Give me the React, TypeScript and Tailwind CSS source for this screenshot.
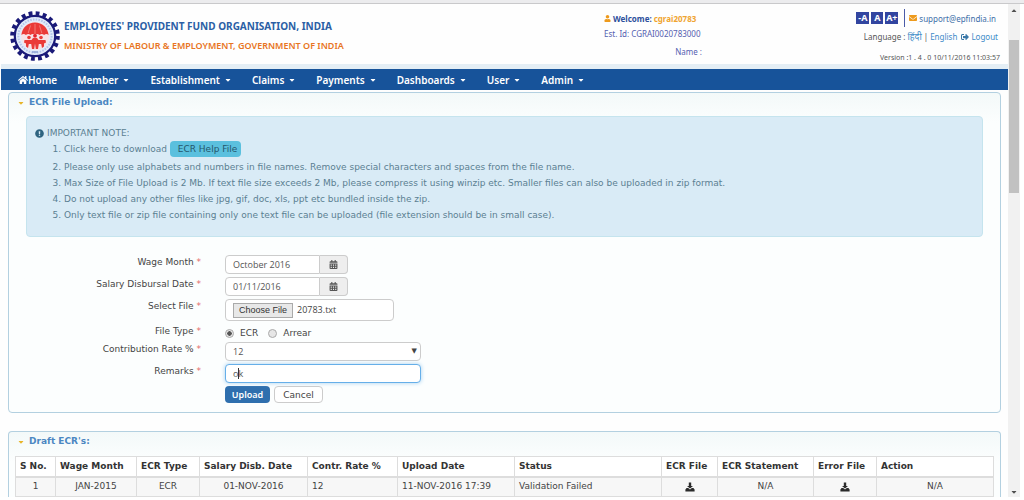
import type { ReactNode } from 'react'
import { FaCalendarAlt, FaCaretDown, FaEnvelope, FaExclamationCircle, FaHome, FaSignOutAlt, FaUser } from 'react-icons/fa'

const menus = ['Member', 'Establishment', 'Claims', 'Payments', 'Dashboards', 'User', 'Admin']

const columns = [
  { title: 'S No.', width: 'w-[40px]' },
  { title: 'Wage Month', width: 'w-[81px]' },
  { title: 'ECR Type', width: 'w-[63px]' },
  { title: 'Salary Disb. Date', width: 'w-[108px]' },
  { title: 'Contr. Rate %', width: 'w-[90px]' },
  { title: 'Upload Date', width: 'w-[117px]' },
  { title: 'Status', width: 'w-[147px]' },
  { title: 'ECR File', width: 'w-[56px]' },
  { title: 'ECR Statement', width: 'w-[96px]' },
  { title: 'Error File', width: 'w-[63px]' },
  { title: 'Action', width: 'w-[117px]' },
]

function Logo() {
  return (
    <svg viewBox="0 0 50 50" className="size-[50px] shrink-0" role="img" aria-label="EPFO">
      <circle cx="25" cy="25" r="22.6" fill="none" stroke="#1a1a78" strokeWidth="4.4" strokeDasharray="3.8 3.3" />
      <circle cx="25" cy="25" r="20.2" fill="#e2ebfa" stroke="#1a1a78" strokeWidth="2.2" />
      <circle cx="25" cy="25" r="16.6" fill="none" stroke="#b4c6ea" strokeWidth="2" strokeDasharray="1.6 1.2" />
      <circle cx="25" cy="25" r="14" fill="#f8e2e6" />
      <path d="M11.400 24C12 16.500 18 11.400 25 11.400S38 16.500 38.600 24c-1.500-1.200-3.100-1.200-4.500 0-1.500-1.200-3-1.200-4.600 0-1.500-1.200-3-1.200-4.500 0-1.500-1.200-3-1.200-4.500 0-1.500-1.200-3-1.200-4.600 0-1.400-1.200-3-1.200-4.500 0z" fill="#ea3a38" />
      <path d="M25 13v10M20.500 14.500L18.200 22M29.500 14.500L31.800 22" stroke="#f7a5a0" strokeWidth="0.6" />
      <circle cx="19" cy="26.500" r="1.800" fill="#ea3a38" />
      <circle cx="31" cy="26.500" r="1.800" fill="#ea3a38" />
      <circle cx="25" cy="24.800" r="1.900" fill="#e3222b" />
      <path d="M14.500 29h7l1.500-2h4l1.500 2h7l.5 2.500-2 1v3l-2 1.500-.8-4h-2.400l-.8 5h-2.200L25 32.500 24.200 38H22l-.8-5h-2.400l-.8 4-2-1.500v-3l-2-1z" fill="#ea3a38" />
      <path d="M22 41h6" stroke="#8ea3d6" strokeWidth="1.5" />
    </svg>
  )
}

function DownloadIcon() {
  return (
    <svg viewBox="0 0 10 10" className="inline size-[10px]" fill="#2b2b2b">
      <path d="M3.800 0.500h2.400v3.500h1.800L5 6.600 2 4h1.800z" />
      <path d="M1.600 6h1.600L5 7.400 6.800 6h1.600l1.200 1.600v1.900H.4V7.600z" />
    </svg>
  )
}

function Panel({ title, children, last }: { title: string; children: ReactNode; last?: boolean }) {
  return (
    <section className={`mx-2 mr-[7px] border border-[#b3d0e0] bg-linear-to-b from-[#f3f9f9] to-[#fcfefe] to-[30px] ${last ? 'rounded-t border-b-0' : 'rounded'}`}>
      <h2 className="flex h-4 items-center gap-1 pl-2 pt-1 text-[9px] font-bold text-[#4b87c2]">
        <FaCaretDown className="size-2 text-[#e8b52a]" />
        {title}
      </h2>
      {children}
    </section>
  )
}

function Row({ label, htmlFor, height, children }: { label: string; htmlFor: string; height: string; children: ReactNode }) {
  return (
    <div className={`flex gap-6 ${height}`}>
      <label htmlFor={htmlFor} className="w-48 text-right leading-[14px]">
        {label} <span className="text-[#e46a6a]">*</span>
      </label>
      {children}
    </div>
  )
}

function DateField({ id, value }: { id: string; value: string }) {
  return (
    <div className="flex h-[19px] w-[123px]">
      <input id={id} defaultValue={value} className="min-w-0 flex-1 rounded-l-sm border border-[#cccccc] bg-white px-[7px] font-['Open_Sans',sans-serif] text-[9px] text-[#555555]" />
      <button type="button" aria-label="Open calendar" className="flex w-7 items-center justify-center rounded-r-sm border border-l-0 border-[#cccccc] bg-[#eeeeee] text-[#555555]">
        <FaCalendarAlt className="size-[9px]" />
      </button>
    </div>
  )
}

export default function App() {
  return (
    <div className="flex h-screen flex-col overflow-hidden bg-white pb-[3px] font-['DejaVu_Sans',sans-serif] text-[9px] text-[#444444]">
      <div className="h-1 shrink-0 border-b border-[#c9c9cb] bg-[#ececee]" />
      <div className="flex min-h-0 flex-1">
        <main className="min-w-0 flex-1 overflow-hidden bg-[#fefefe]">
          <header className="flex h-[60px] items-start pl-[10px] pr-2 font-['Noto_Sans',sans-serif]">
            <div className="flex flex-1 gap-1 pt-[7px]">
              <Logo />
              <div className="leading-5 text-[#2b5fa5]">
                <h1 className="pt-[5px] text-[10px] font-bold">EMPLOYEES' PROVIDENT FUND ORGANISATION, INDIA</h1>
                <p className="text-[9px] font-semibold text-[#e87422]">MINISTRY OF LABOUR &amp; EMPLOYMENT, GOVERNMENT OF INDIA</p>
              </div>
            </div>
            <div className="w-[98px] pt-[7px] text-[8px] leading-[15px] text-[#5560b0]">
              <p className="flex items-center gap-[2px] whitespace-nowrap font-bold text-[#2d4f9c]">
                <FaUser className="size-[7px] shrink-0 text-[#ee9a1c]" />
                Welcome: <span className="text-[#f0a530]">cgrai20783</span>
              </p>
              <p className="whitespace-nowrap">Est. Id: CGRAI0020783000</p>
              <p className="pt-[3px] text-right">Name :</p>
            </div>
            <div className="flex w-[298px] flex-col items-end pt-[5px] text-[8px] leading-[15px] text-[#555555]">
              <div className="flex items-center gap-[2px] pr-1">
                <button type="button" className="h-3 w-[13px] bg-[#3245a0] text-[9px] font-bold leading-3 text-white">-A</button>
                <button type="button" className="h-3 w-3 bg-[#3245a0] text-[9px] font-bold leading-3 text-white">A</button>
                <button type="button" className="h-3 w-[13px] bg-[#3245a0] text-[9px] font-bold leading-3 text-white">A+</button>
                <span className="ml-1 mr-[2px] h-[18px] w-px bg-[#4a5ba8]" />
                <FaEnvelope className="size-2 text-[#ee9a1c]" />
                <a href="mailto:support@epfindia.in" className="text-[#3d6fa8]">support@epfindia.in</a>
              </div>
              <p className="flex items-center gap-[2px] pr-[2px] pt-[2px]">
                Language : <a href="#hindi" className="text-[9px] text-[#3d8bc8]">हिंदी</a> | <a href="#english" className="text-[#3d8bc8]">English</a>
                <a href="#logout" className="ml-[2px] flex items-center gap-[2px] text-[#3d8bc8]">
                  <FaSignOutAlt className="size-2 text-[#3a78a8]" />
                  Logout
                </a>
              </p>
              <p className="pt-[6px] text-[7px]">Version :1 . 4 . 0 10/11/2016 11:03:57</p>
            </div>
          </header>
          <nav className="ml-px mb-[2px] flex h-[26px] gap-5 border-t-[5px] border-[#e4eef5] bg-[#17539a] pl-[17px] font-['Noto_Sans',sans-serif] text-[10px] font-semibold leading-5 text-white">
            <a href="#home" className="flex items-center">
              <FaHome className="size-[10px]" />
              Home
            </a>
            {menus.map(name => (
              <a key={name} href={`#${name.toLowerCase()}`} className="flex items-center gap-1">
                {name}
                <FaCaretDown className="size-2" />
              </a>
            ))}
          </nav>

          <Panel title="ECR File Upload:">
            <div className="mx-[17px] mt-[7px] rounded-sm border border-[#c5e4ee] bg-[#d9ebf6] px-2 pb-[13px] pt-2 leading-4 text-[#5b7f92]">
              <p className="flex items-center gap-[3px]">
                <FaExclamationCircle className="size-[9px] text-[#2f6480]" />
                IMPORTANT NOTE:
              </p>
              <ol className="list-decimal pl-[29px]">
                <li className="pb-[2px]">
                  Click here to download{' '}
                  <a href="#help" className="inline-block rounded-sm bg-[#5bc0de] pl-2 pr-1 text-[#25566b]">ECR Help File</a>
                </li>
                <li>Please only use alphabets and numbers in file names. Remove special characters and spaces from the file name.</li>
                <li>Max Size of File Upload is 2 Mb. If text file size exceeds 2 Mb, please compress it using winzip etc. Smaller files can also be uploaded in zip format.</li>
                <li>Do not upload any other files like jpg, gif, doc, xls, ppt etc bundled inside the zip.</li>
                <li>Only text file or zip file containing only one text file can be uploaded (file extension should be in small case).</li>
              </ol>
            </div>

            <form className="pb-[9px] pt-[18px]" onSubmit={e => e.preventDefault()}>
              <Row label="Wage Month" htmlFor="wage" height="h-[22px]">
                <DateField id="wage" value="October 2016" />
              </Row>
              <Row label="Salary Disbursal Date" htmlFor="salary" height="h-[22px]">
                <DateField id="salary" value="01/11/2016" />
              </Row>
              <Row label="Select File" htmlFor="file" height="h-[25px]">
                <label className="flex h-[22px] w-[169px] items-center gap-1 rounded-sm border border-[#cccccc] bg-white px-[7px]">
                  <input id="file" type="file" className="sr-only" />
                  <span className="border border-[#aaaaaa] bg-[#e8e8e8] px-[5px] font-['Liberation_Sans',sans-serif] leading-[13px] text-[#333333]">Choose File</span>
                  <span className="font-['Open_Sans',sans-serif]">20783.txt</span>
                </label>
              </Row>
              <Row label="File Type" htmlFor="ecr" height="h-[18px]">
                <div className="flex items-center gap-[6px] leading-[14px]">
                  <input id="ecr" type="radio" name="type" defaultChecked className="size-[9px] appearance-none rounded-full border border-[#aaaaaa] bg-[#e6e6e6] checked:bg-radial checked:from-[#555555] checked:from-40% checked:to-[#e6e6e6] checked:to-50%" />
                  <label htmlFor="ecr">ECR</label>
                  <input id="arrear" type="radio" name="type" className="ml-1 size-[9px] appearance-none rounded-full border border-[#aaaaaa] bg-[#e6e6e6]" />
                  <label htmlFor="arrear">Arrear</label>
                </div>
              </Row>
              <Row label="Contribution Rate %" htmlFor="rate" height="h-[22px]">
                <div className="relative h-[19px] w-[196px]">
                  <select id="rate" className="h-full w-full appearance-none rounded-sm border border-[#cccccc] bg-white px-[7px] font-['Open_Sans',sans-serif] text-[9px] text-[#555555]">
                    <option>12</option>
                  </select>
                  <span className="pointer-events-none absolute right-1 top-0 text-[7px] leading-[18px]">▼</span>
                </div>
              </Row>
              <Row label="Remarks" htmlFor="remarks" height="h-[22px]">
                <div className="relative h-[19px] w-[196px]">
                  <input id="remarks" defaultValue="ok" className="h-full w-full rounded-sm border border-[#66afe9] bg-white px-[7px] font-['Open_Sans',sans-serif] text-[9px] text-[#555555] shadow-[0_0_4px_#a5d0f0] outline-none" />
                  <span className="absolute left-[13px] top-1 h-[11px] w-px bg-[#333333]" />
                </div>
              </Row>
              <div className="flex h-[17px] gap-1 pl-[216px]">
                <button type="submit" className="w-[45px] rounded-sm bg-[#2f6fae] font-['Noto_Sans',sans-serif] text-[9px] font-semibold text-white">Upload</button>
                <button type="button" className="w-[49px] rounded-sm border border-[#cccccc] bg-white leading-3">Cancel</button>
              </div>
            </form>
          </Panel>

          <div className="h-[18px]" />

          <Panel title="Draft ECR's:" last>
            <div className="px-[6px] pt-2">
              <table className="w-full table-fixed border-collapse bg-white">
                <thead>
                  <tr className="h-5">
                    {columns.map(c => (
                      <th key={c.title} className={`${c.width} whitespace-nowrap border border-b-2 border-[#dddddd] px-1 text-left font-bold text-[#333333]`}>{c.title}</th>
                    ))}
                  </tr>
                </thead>
                <tbody>
                  <tr className="h-5 whitespace-nowrap bg-[#f7f7f7] text-center *:border *:border-[#dddddd] *:px-1">
                    <td>1</td>
                    <td>JAN-2015</td>
                    <td>ECR</td>
                    <td>01-NOV-2016</td>
                    <td className="text-left">12</td>
                    <td className="text-left">11-NOV-2016 17:39</td>
                    <td className="text-left">Validation Failed</td>
                    <td><a href="#ecr-file" aria-label="Download ECR file"><DownloadIcon /></a></td>
                    <td>N/A</td>
                    <td><a href="#error-file" aria-label="Download error file"><DownloadIcon /></a></td>
                    <td>N/A</td>
                  </tr>
                </tbody>
              </table>
            </div>
          </Panel>
        </main>
        <aside className="mr-1 flex w-3 flex-col items-center bg-[#f1f1f1] text-[#505050]">
          <FaCaretDown className="mt-[3px] size-2 rotate-180" />
          <div className="mt-[25px] h-[153px] w-[10px] bg-[#c1c1c1]" />
          <FaCaretDown className="mb-px mt-auto size-2" />
        </aside>
      </div>
    </div>
  )
}
